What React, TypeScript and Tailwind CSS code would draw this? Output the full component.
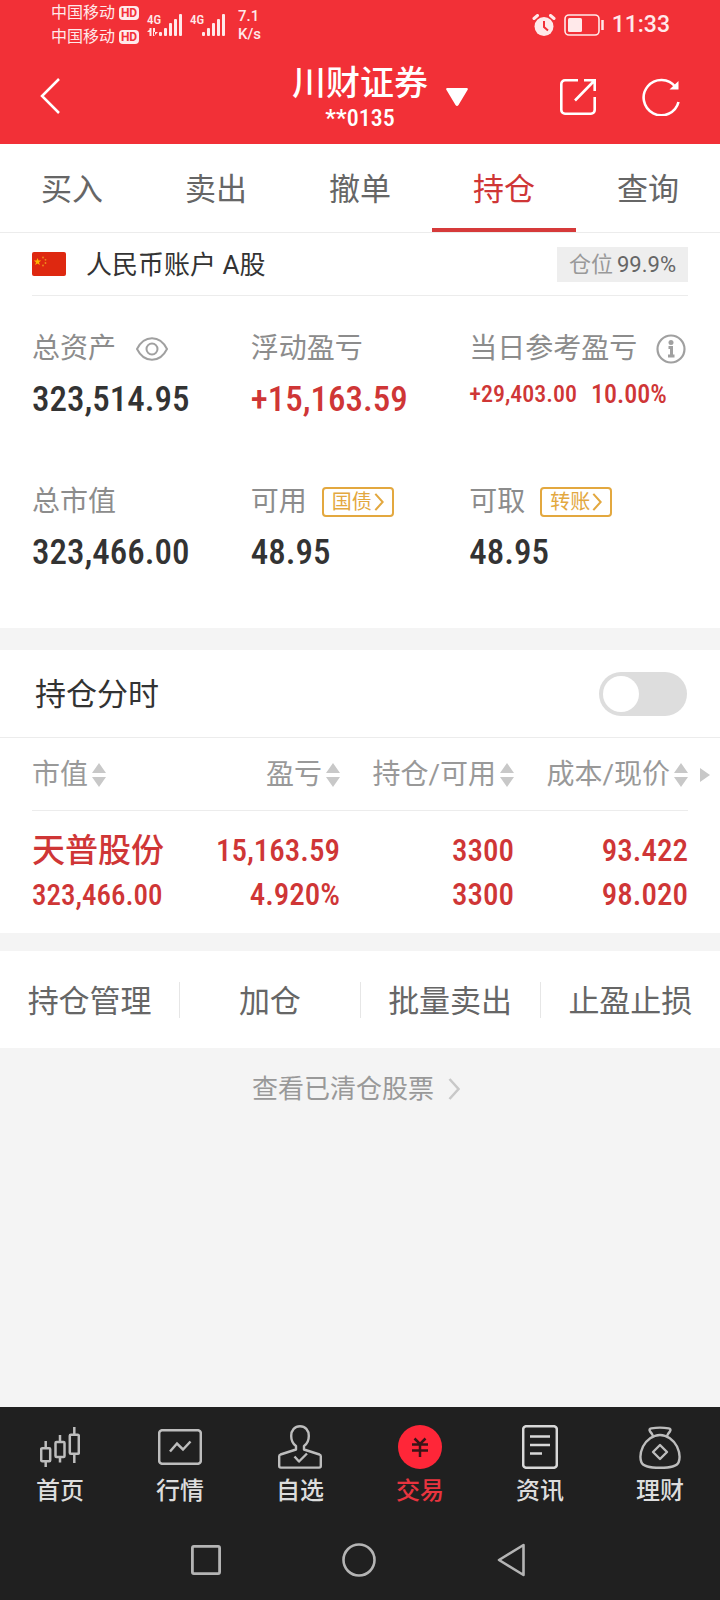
import { useState } from "react";

const tabs = ["买入", "卖出", "撤单", "持仓", "查询"];

const columns = ["市值", "盈亏", "持仓/可用", "成本/现价"];

const actions = ["持仓管理", "加仓", "批量卖出", "止盈止损"];

const navItems = [
  { label: "首页", icon: <CandlesIcon /> },
  { label: "行情", icon: <MarketIcon /> },
  { label: "自选", icon: <PersonIcon /> },
  { label: "交易", icon: <TradeIcon /> },
  { label: "资讯", icon: <NewsIcon /> },
  { label: "理财", icon: <MoneyBagIcon /> },
];

function CandlesIcon() {
  return (
    <svg className="w-10 h-10" viewBox="0 0 40 40" fill="none" stroke="currentColor" strokeWidth="2.5">
      <rect x="1.200" y="21.200" width="9" height="13" rx="1" />
      <path d="M5.700 14v7M5.700 34v6" />
      <rect x="15.500" y="15" width="9" height="15" rx="1" />
      <path d="M20 8v7M20 30v5.500" />
      <rect x="29.800" y="7.800" width="9" height="19" rx="1" />
      <path d="M34.300 0v7.500M34.300 27v9" />
    </svg>
  );
}

function MarketIcon() {
  return (
    <svg className="w-11 h-9" viewBox="0 0 44 36" fill="none" stroke="currentColor" strokeWidth="2.5">
      <rect x="1.2" y="1.2" width="41.6" height="33.6" rx="3" />
      <path d="M12 22.500L19 14.500l6 6L32.500 12.500" />
    </svg>
  );
}

function PersonIcon() {
  return (
    <svg className="w-11 h-11" viewBox="0 0 44 44" fill="none" stroke="currentColor" strokeWidth="2.400" strokeLinejoin="round">
      <path d="M18 24.500v-3.500C15 19 13.200 15.500 13.200 11c0-6 3.600-9.800 8.800-9.800s8.800 3.800 8.800 9.800c0 4.500-1.800 8-4.800 10v3.500l15.500 5c.8.3 1.300.9 1.300 1.700V41c0 1-.6 1.600-1.600 1.600H2.800c-1 0-1.600-.6-1.600-1.600v-9.800c0-.8.5-1.400 1.300-1.700z" />
      <path d="M16.500 31.500l4.500 5 8-8" />
    </svg>
  );
}

function TradeIcon() {
  return (
    <svg className="w-11 h-11" viewBox="0 0 44 44" fill="none">
      <circle cx="22" cy="22" r="22" fill="#ff2638" />
      <path d="M16.500 13.500l5.500 5.500 5.500-5.500M14 19.500h16M14 25.500h16M22 19v13" stroke="#3a1417" strokeWidth="2.500" />
    </svg>
  );
}

function NewsIcon() {
  return (
    <svg className="w-9 h-11" viewBox="0 0 36 44" fill="none" stroke="#d8d8d8" strokeWidth="2.500">
      <rect x="1.200" y="1.200" width="33.600" height="41.600" rx="3" />
      <path d="M8 11.500h20M8 20h20M8 28.500h12" />
    </svg>
  );
}

function MoneyBagIcon() {
  return (
    <svg className="w-[42px] h-11" viewBox="0 0 42 44" fill="none" stroke="currentColor" strokeWidth="2.400" strokeLinejoin="round">
      <path d="M14 11c-.6-2-1.800-3.200-3-4.600-1.100-1.700-.3-2.700 1.300-3 5.300-.9 12.100-.9 17.400 0 1.600.3 2.400 1.300 1.300 3-1.200 1.400-2.400 2.600-3 4.600" />
      <path d="M21 10c-7 0-13.500 5-17 11.500C1.400 27 .9 33 2.300 37c1.600 4.500 8 5.800 18.700 5.800s17.100-1.300 18.700-5.800c1.400-4 .9-10-1.700-15.500C34.500 15 28 10 21 10z" />
      <path d="M21 20l7 7-7 7-7-7z" />
    </svg>
  );
}

function SignalBars() {
  return (
    <svg className="w-6 h-[22px]" viewBox="0 0 24 22" fill="currentColor">
      <rect x="0" y="18" width="3" height="4" rx="1" />
      <rect x="5" y="14" width="3" height="8" rx="1" />
      <rect x="10" y="9" width="3" height="13" rx="1" />
      <rect x="15" y="5" width="3" height="17" rx="1" />
      <rect x="20" y="0" width="3" height="22" rx="1" />
    </svg>
  );
}

function Chevron({ className }: { className: string }) {
  return (
    <svg className={className} viewBox="0 0 12 22" fill="none" stroke="currentColor" strokeWidth="2.500">
      <path d="M1.500 1l9 10-9 10" />
    </svg>
  );
}

function SortArrows() {
  return (
    <svg className="w-3.5 h-6 shrink-0" viewBox="0 0 14 24" fill="#c8c8c8">
      <path d="M7 0l7 10H0zM7 24l7-10H0z" />
    </svg>
  );
}

function StatusBar() {
  return (
    <div className="flex h-12 items-center justify-between pl-[51px] pr-[50px] pt-0.5 text-[#ffe9ea]">
      <div className="flex items-center">
        <div className="flex flex-col">
          {["sim1", "sim2"].map((sim) => (
            <div key={sim} className="flex h-6 items-center gap-1 text-base leading-6">
              <span>中国移动</span>
              <span className="flex h-3.5 w-5 items-center justify-center rounded bg-[#ffe9ea] font-bold text-[#f23037] text-xs leading-none">
                HD
              </span>
            </div>
          ))}
        </div>
        <div className="ml-2 flex items-start">
          <div className="flex w-3 flex-col items-start font-['Roboto_Condensed',sans-serif] font-medium text-[13px] leading-3">
            <span>4G</span>
            <svg className="mt-0.5 w-3 h-2" viewBox="0 0 12 8" fill="currentColor">
              <path d="M2.500 0h2v8h-2zM0 4L4 0v4zM6 0h2v8H6zM7 8l4-4H7z" />
            </svg>
          </div>
          <SignalBars />
        </div>
        <div className="ml-[7px] flex items-start">
          <span className="w-3 font-['Roboto_Condensed',sans-serif] font-medium text-[13px] leading-3">4G</span>
          <SignalBars />
        </div>
        <div className="ml-3 flex flex-col font-medium text-[15px] leading-[18px]">
          <span>7.1</span>
          <span>K/s</span>
        </div>
      </div>
      <div className="flex items-center gap-2">
        <svg className="w-6 h-[22px]" viewBox="0 0 24 22">
          <circle cx="12" cy="12.500" r="9.500" fill="currentColor" />
          <path d="M2 4.500L5.500 1.500M22 4.500L18.500 1.500" stroke="currentColor" strokeWidth="3" strokeLinecap="round" />
          <path d="M12 7v6l4 3.500" fill="none" stroke="#f23037" strokeWidth="2" />
        </svg>
        <svg className="w-10 h-[22px]" viewBox="0 0 40 22" fill="none" stroke="currentColor">
          <rect x="1" y="1" width="34" height="20" rx="4" strokeWidth="1.600" />
          <rect x="4" y="4" width="14" height="14" rx="1.500" fill="currentColor" stroke="none" />
          <path d="M38.500 6v10" strokeWidth="2.500" />
        </svg>
        <span className="font-medium text-[23px] leading-6">11:33</span>
      </div>
    </div>
  );
}

function Header() {
  return (
    <header className="bg-[#f23037] text-white">
      <StatusBar />
      <div className="grid h-24 grid-cols-[1fr_auto_1fr] items-center px-10">
        <button aria-label="返回" className="justify-self-start">
          <svg className="w-5 h-9" viewBox="0 0 20 36" fill="none" stroke="currentColor" strokeWidth="2.500">
            <path d="M19 1L2 18l17 17" />
          </svg>
        </button>
        <button className="relative flex flex-col items-center pt-0.5">
          <span className="font-medium text-[34px] leading-[42px]">川财证券</span>
          <span className="font-['Roboto_Condensed',sans-serif] font-medium text-2xl leading-7">**0135</span>
          <svg className="absolute -right-10 top-7 w-[22px] h-[18px]" viewBox="0 0 22 18" fill="currentColor">
            <path d="M1.500 0h19c1.200 0 1.800 1 1 2L12.500 17c-.8 1.200-2.200 1.200-3 0L.5 2c-.8-1-.2-2 1-2z" />
          </svg>
        </button>
        <div className="flex items-center gap-[46px] justify-self-end pt-0.5">
          <button aria-label="分享">
            <svg className="w-9 h-9" viewBox="0 0 36 36" fill="none" stroke="currentColor" strokeWidth="2.600">
              <path d="M18 1.300H5A3.700 3.700 0 0 0 1.300 5v26A3.700 3.700 0 0 0 5 34.700h26a3.700 3.700 0 0 0 3.700-3.700V18" />
              <path d="M24 1.300h10.700V12M34.500 1.500L15 21.500" />
            </svg>
          </button>
          <button aria-label="刷新">
            <svg className="w-[38px] h-[38px]" viewBox="0 0 38 38" fill="none" stroke="currentColor" strokeWidth="2.600">
              <path d="M36.500 24A17.700 17.700 0 1 1 33.500 9" />
              <path d="M36.500 3V11.500h-9z" fill="currentColor" stroke="none" />
            </svg>
          </button>
        </div>
      </div>
    </header>
  );
}

function Tabs() {
  return (
    <nav className="flex h-[89px] border-b border-[#ececec] bg-white">
      {tabs.map((t) => (
        <button
          key={t}
          className={
            t === "持仓"
              ? "flex-1 border-b-4 border-[#d63a3a] pt-2 text-[31px] leading-10 text-[#cf3636]"
              : "flex-1 border-b-4 border-transparent pt-2 text-[31px] leading-10 text-[#666]"
          }
        >
          {t}
        </button>
      ))}
    </nav>
  );
}

function QuickLink({ label }: { label: string }) {
  return (
    <a href="#" className="flex h-[30px] items-center gap-0.5 rounded-sm border-2 border-[#e3a83f] px-2 text-xl leading-6 text-[#e3a83f]">
      {label}
      <Chevron className="w-2.5 h-[18px]" />
    </a>
  );
}

function Account() {
  return (
    <section className="bg-white px-8">
      <div className="flex h-[63px] items-center border-b border-[#ececec]">
        <svg className="w-[34px] h-6" viewBox="0 0 34 24">
          <rect width="34" height="24" rx="2" fill="#de2810" />
          <path d="M5.500 6l1 2.600h2.700L7 10.300l.8 2.700-2.300-1.600L3.200 13l.8-2.700-2.200-1.700h2.700z" fill="#ffb400" />
          <g fill="#f08a1c">
            <circle cx="11" cy="5.500" r=".9" />
            <circle cx="13.500" cy="7.800" r=".9" />
            <circle cx="13.500" cy="11" r=".9" />
            <circle cx="11" cy="13.500" r=".9" />
          </g>
        </svg>
        <h2 className="ml-5 pt-0.5 text-[26px] leading-8 text-[#333]">人民币账户 A股</h2>
        <div className="ml-auto flex h-[35px] items-center gap-1 bg-[#eee] px-3 pt-0.5 text-[22px] leading-7">
          <span className="text-[#999]">仓位</span>
          <span className="text-[#666]">99.9%</span>
        </div>
      </div>
      <dl className="grid grid-cols-3 gap-y-[62px] pb-[55px] pt-[33px]">
        <div>
          <dt className="flex h-10 items-center gap-5 text-[28px] leading-10 text-[#8c8c8c]">
            总资产
            <button aria-label="隐藏金额">
              <svg className="w-8 h-6" viewBox="0 0 32 24" fill="none" stroke="#a0a0a0" strokeWidth="2">
                <path d="M1 12C4.500 5 9.500 1.200 16 1.200S27.500 5 31 12c-3.500 7-8.500 10.800-15 10.800S4.500 19 1 12z" />
                <circle cx="16" cy="12" r="5.500" />
              </svg>
            </button>
          </dt>
          <dd className="mt-[11px] font-['Roboto_Condensed',sans-serif] font-medium text-[35px] leading-10 text-[#333]">323,514.95</dd>
        </div>
        <div>
          <dt className="h-10 text-[28px] leading-10 text-[#8c8c8c]">浮动盈亏</dt>
          <dd className="mt-[11px] font-['Roboto_Condensed',sans-serif] font-medium text-[35px] leading-10 text-[#cf3636]">+15,163.59</dd>
        </div>
        <div>
          <dt className="flex h-10 items-center justify-between whitespace-nowrap pr-0.5 text-[28px] leading-10 text-[#8c8c8c]">
            当日参考盈亏
            <button aria-label="说明">
              <svg className="w-[30px] h-[30px]" viewBox="0 0 30 30" fill="none" stroke="#a0a0a0" strokeWidth="2.200">
                <circle cx="15" cy="15" r="13.500" />
                <circle cx="15" cy="8.500" r="2.500" fill="#a0a0a0" stroke="none" />
                <path d="M12.500 13.500h3v8M12 22h6.500" strokeWidth="3" />
              </svg>
            </button>
          </dt>
          <dd className="mt-[7px] flex items-center gap-3.5 font-['Roboto_Condensed',sans-serif] font-medium text-2xl leading-9 text-[#cf3636]">
            <span>+29,403.00</span>
            <span className="text-[26px] leading-9">10.00%</span>
          </dd>
        </div>
        <div>
          <dt className="h-10 text-[28px] leading-10 text-[#8c8c8c]">总市值</dt>
          <dd className="mt-[11px] font-['Roboto_Condensed',sans-serif] font-medium text-[35px] leading-10 text-[#333]">323,466.00</dd>
        </div>
        <div>
          <dt className="flex h-10 items-center gap-[15px] text-[28px] leading-10 text-[#8c8c8c]">
            可用
            <QuickLink label="国债" />
          </dt>
          <dd className="mt-[11px] font-['Roboto_Condensed',sans-serif] font-medium text-[35px] leading-10 text-[#333]">48.95</dd>
        </div>
        <div>
          <dt className="flex h-10 items-center gap-[15px] text-[28px] leading-10 text-[#8c8c8c]">
            可取
            <QuickLink label="转账" />
          </dt>
          <dd className="mt-[11px] font-['Roboto_Condensed',sans-serif] font-medium text-[35px] leading-10 text-[#333]">48.95</dd>
        </div>
      </dl>
    </section>
  );
}

function Positions() {
  const [intraday, setIntraday] = useState(false);

  return (
    <section className="mt-[22px] bg-white">
      <div className="flex h-[88px] items-center justify-between border-b border-[#ececec] pl-[35px] pr-[33px]">
        <label htmlFor="intraday" className="pt-0.5 text-[31px] leading-10 text-[#333]">
          持仓分时
        </label>
        <input
          id="intraday"
          type="checkbox"
          role="switch"
          checked={intraday}
          onChange={(e) => setIntraday(e.target.checked)}
          className="h-11 w-[88px] appearance-none rounded-full bg-[#ddd] p-1 before:block before:size-9 before:rounded-full before:bg-white checked:bg-[#cf3636] checked:before:ml-auto"
        />
      </div>
      <div className="pl-8">
        <table className="w-full table-fixed border-separate border-spacing-0">
          <colgroup>
            <col className="w-[134px]" />
            <col />
            <col />
            <col />
            <col className="w-8" />
          </colgroup>
          <thead>
            <tr className="h-[73px]">
              {columns.map((c, i) => (
                <th key={c} className="border-b border-[#ececec] p-0 pt-0.5 font-normal">
                  <button
                    className={
                      i === 0
                        ? "flex items-center gap-1 whitespace-nowrap text-[28px] leading-10 text-[#999]"
                        : "ml-auto flex items-center gap-1 whitespace-nowrap text-[28px] leading-10 text-[#999]"
                    }
                  >
                    {c}
                    <SortArrows />
                  </button>
                </th>
              ))}
              <th className="p-0 pl-3">
                <svg className="w-2.5 h-3.5" viewBox="0 0 10 14" fill="#c8c8c8">
                  <path d="M0 0l10 7-10 7z" />
                </svg>
              </th>
            </tr>
          </thead>
          <tbody>
            <tr className="text-right font-['Roboto_Condensed','Noto_Sans_CJK_SC',sans-serif] font-medium text-[31px] leading-[44px] text-[#cf3636]">
              <td className="whitespace-nowrap px-0 pb-4 pt-[18px] text-left">
                <div className="text-[33px]">天普股份</div>
                <div className="text-[29px]">323,466.00</div>
              </td>
              <td className="px-0 pb-4 pt-[18px]">
                <div>15,163.59</div>
                <div>4.920%</div>
              </td>
              <td className="px-0 pb-4 pt-[18px]">
                <div>3300</div>
                <div>3300</div>
              </td>
              <td className="px-0 pb-4 pt-[18px]">
                <div>93.422</div>
                <div>98.020</div>
              </td>
              <td />
            </tr>
          </tbody>
        </table>
      </div>
    </section>
  );
}

function Actions() {
  return (
    <div className="mt-[18px] flex h-[97px] items-center divide-x divide-[#e6e6e6] bg-white">
      {actions.map((a) => (
        <button key={a} className="h-9 flex-1 whitespace-nowrap pt-0.5 text-[31px] leading-9 text-[#666]">
          {a}
        </button>
      ))}
    </div>
  );
}

function BottomNav() {
  return (
    <footer className="mt-auto bg-[#202020]">
      <nav className="flex h-28 pt-[18px]">
        {navItems.map((n) => (
          <a
            key={n.label}
            href="#"
            className={
              n.label === "交易"
                ? "flex flex-1 flex-col items-center font-medium text-2xl text-[#e8343f]"
                : "flex flex-1 flex-col items-center font-medium text-2xl text-[#ddd]"
            }
          >
            <span className={n.label === "交易" ? "flex h-11 items-center" : "flex h-11 items-center text-[#bdbdbd]"}>
              {n.icon}
            </span>
            <span className="mt-1.5 leading-8">{n.label}</span>
          </a>
        ))}
      </nav>
      <div className="flex h-[81px] items-center justify-center gap-[121px] pr-1 text-[#b4b4b4]">
        <button aria-label="最近任务">
          <svg className="w-[30px] h-[30px]" viewBox="0 0 30 30" fill="none" stroke="currentColor" strokeWidth="2.800">
            <rect x="1.400" y="1.400" width="27.200" height="27.200" rx="1.500" />
          </svg>
        </button>
        <button aria-label="主屏幕">
          <svg className="w-[34px] h-[34px]" viewBox="0 0 34 34" fill="none" stroke="currentColor" strokeWidth="2.600">
            <circle cx="17" cy="17" r="15.500" />
          </svg>
        </button>
        <button aria-label="后退">
          <svg className="w-7 h-[34px]" viewBox="0 0 28 34" fill="none" stroke="currentColor" strokeWidth="2.600" strokeLinejoin="round">
            <path d="M26.500 2v30L2 17z" />
          </svg>
        </button>
      </div>
    </footer>
  );
}

export default function App() {
  return (
    <div className="flex min-h-screen flex-col bg-[#f4f4f4] font-[Roboto,'Noto_Sans_CJK_SC',sans-serif]">
      <Header />
      <Tabs />
      <Account />
      <Positions />
      <Actions />
      <a href="#" className="flex h-[82px] items-center justify-center gap-3.5 pr-2 text-[26px] leading-8 text-[#999]">
        查看已清仓股票
        <Chevron className="w-3 h-[22px] text-[#c8c8c8]" />
      </a>
      <BottomNav />
    </div>
  );
}
